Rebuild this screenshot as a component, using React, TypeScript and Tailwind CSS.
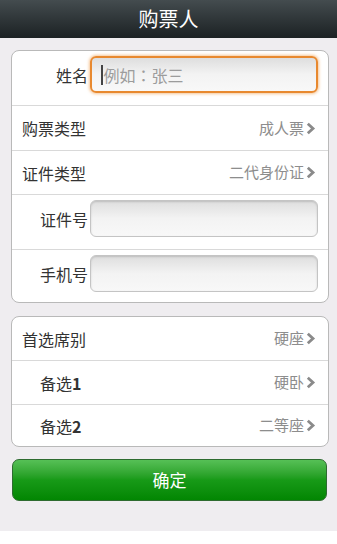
import React from "react";

const Chevron = () => (
  <svg width="10" height="13" viewBox="0 0 10 13" className="ml-[2px]">
    <path d="M1.8 1.8 L7 6.5 L1.8 11.2" fill="none" stroke="#8a8a8a" strokeWidth="2.8" strokeLinejoin="miter" />
  </svg>
);

const SelectRow = ({ label, value, indent, h, top }: { label: React.ReactNode; value: string; indent?: boolean; h: string; top?: boolean }) => (
  <div className={`flex items-center justify-between pr-[12px] ${h} ${top ? "border-t border-[#d9d9d9]" : ""} ${indent ? "pl-[28px]" : "pl-[10px]"}`}>
    <span className="text-[16px] text-[#333]">{label}</span>
    <span className="flex items-center text-[15px] text-[#8d8d8d]">
      {value}
      <Chevron />
    </span>
  </div>
);

const InputRow = ({ label, h, top, active, placeholder }: { label: string; h: string; top?: boolean; active?: boolean; placeholder?: string }) => (
  <div className={`flex items-start pt-[5px] pr-[10px] ${h} ${top ? "border-t border-[#d9d9d9]" : ""}`}>
    <div className="w-[76px] h-[37px] flex items-center justify-end text-[16px] text-[#333]">{label}</div>
    <div
      className={`ml-[2px] flex-1 h-[37px] rounded-[6px] flex items-center pl-[9px] bg-gradient-to-b from-[#dedede] via-[#f3f3f3] to-[#f8f8f8] ${
        active
          ? "border-2 border-[#e8892f] shadow-[0_0_3px_1px_rgba(240,160,80,0.6)]"
          : "border border-[#c4c4c4] shadow-[inset_0_1px_2px_rgba(0,0,0,0.15)]"
      }`}
    >
      {active && <span className="w-[1.5px] h-[20px] bg-[#444] mr-[1px]" />}
      {placeholder && (
        <span className="text-[16px] text-[#9c9c9c] font-['Noto_Sans_CJK_JP','Noto_Sans_CJK_SC',sans-serif]">{placeholder}</span>
      )}
    </div>
  </div>
);

export default function App() {
  return (
    <div className="w-[337px] font-['Noto_Sans_CJK_SC','Noto_Sans',sans-serif]">
      <div className="h-[38px] flex items-center justify-center bg-gradient-to-b from-[#444c4f] to-[#1c2224] text-white text-[20px]">
        购票人
      </div>
      <div className="bg-[#efedf0] pl-[11px] pr-[8px] pt-[12px] pb-[30px]">
        <div className="bg-white border border-[#b9b9b9] rounded-[8px]">
          <InputRow label="姓名" h="h-[54px]" active placeholder="例如：张三" />
          <SelectRow label="购票类型" value="成人票" h="h-[45px]" top />
          <SelectRow label="证件类型" value="二代身份证" h="h-[44px]" top />
          <InputRow label="证件号" h="h-[55px]" top />
          <InputRow label="手机号" h="h-[53px]" top />
        </div>
        <div className="mt-[13px] bg-white border border-[#b9b9b9] rounded-[8px]">
          <SelectRow label="首选席别" value="硬座" h="h-[43px]" />
          <SelectRow
            label={
              <>
                备选<span className="font-bold">1</span>
              </>
            }
            value="硬卧"
            indent
            h="h-[44px]"
            top
          />
          <SelectRow
            label={
              <>
                备选<span className="font-bold">2</span>
              </>
            }
            value="二等座"
            indent
            h="h-[42px]"
            top
          />
        </div>
        <div className="mt-[12px] ml-[1px] mr-[2px] h-[42px] rounded-[7px] border border-[#2e6b30] bg-gradient-to-b from-[#56c056] via-[#179a17] to-[#028602] flex items-center justify-center text-white text-[17px]">
          确定
        </div>
      </div>
    </div>
  );
}
